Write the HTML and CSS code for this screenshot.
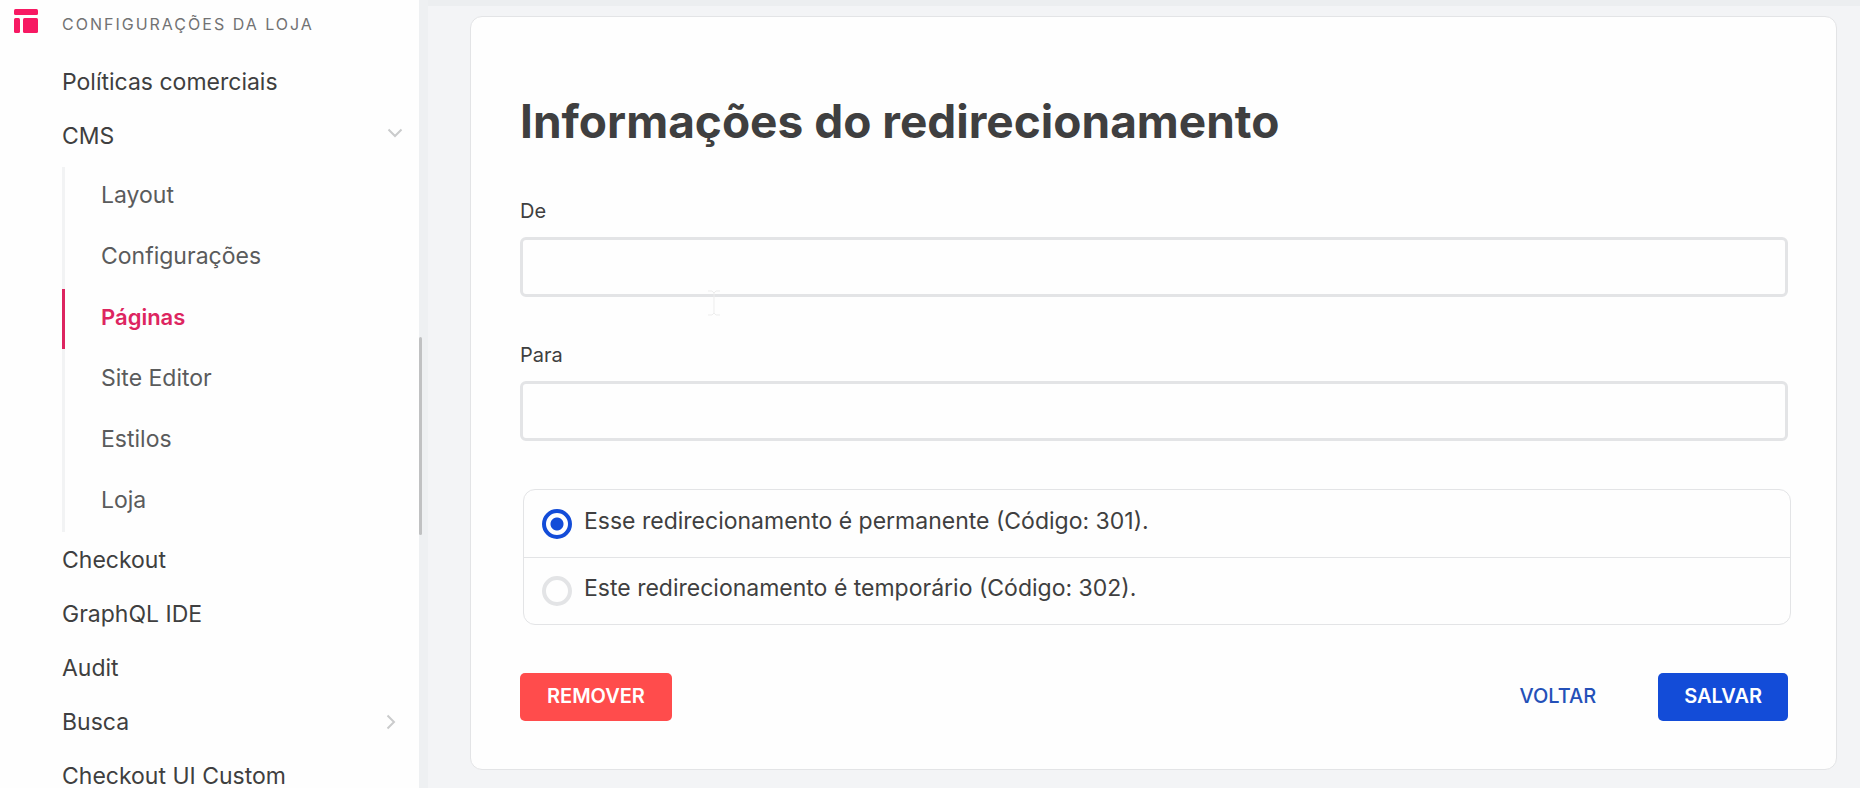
FILE: index.html
```html
<!DOCTYPE html>
<html lang="pt-BR">
<head>
<meta charset="utf-8">
<meta name="viewport" content="width=device-width, initial-scale=1">
<title>Informações do redirecionamento</title>
<link rel="stylesheet" href="styles.css">
</head>
<body>
<div class="app">
  <aside class="sidebar">
    <div class="section-head">
      <svg class="section-icon" viewBox="0 0 24 24" aria-hidden="true">
        <rect x="0" y="0" width="24" height="6" rx="1.5"/>
        <rect x="0" y="9" width="6" height="15" rx="1.5"/>
        <rect x="9" y="9" width="15" height="15" rx="1.5"/>
      </svg>
      <h2 class="section-title">Configurações da loja</h2>
    </div>
    <nav class="menu">
      <a class="menu-item" href="#">Políticas comerciais</a>
      <a class="menu-item" href="#">CMS
        <svg class="chevron-down" viewBox="0 0 16 10" aria-hidden="true"><path d="M1.500 1.500 8 8l6.500-6.500"/></svg>
      </a>
      <div class="submenu">
        <a class="submenu-item" href="#">Layout</a>
        <a class="submenu-item" href="#">Configurações</a>
        <a class="submenu-item is-active" href="#" aria-current="page">Páginas</a>
        <a class="submenu-item" href="#">Site Editor</a>
        <a class="submenu-item" href="#">Estilos</a>
        <a class="submenu-item" href="#">Loja</a>
      </div>
      <a class="menu-item" href="#">Checkout</a>
      <a class="menu-item" href="#">GraphQL IDE</a>
      <a class="menu-item" href="#">Audit</a>
      <a class="menu-item" href="#">Busca
        <svg class="chevron-right" viewBox="0 0 10 16" aria-hidden="true"><path d="M1.500 1.500 8 8l-6.500 6.500"/></svg>
      </a>
      <a class="menu-item" href="#">Checkout UI Custom</a>
    </nav>
    <div class="scroll-thumb"></div>
  </aside>
  <main class="main">
    <form class="card">
      <h1 class="title">Informações do redirecionamento</h1>
      <div class="field">
        <label class="label" for="from">De</label>
        <input class="input" id="from" type="text">
      </div>
      <div class="field">
        <label class="label" for="to">Para</label>
        <input class="input" id="to" type="text">
      </div>
      <div class="options">
        <label class="option" for="r301">
          <input class="radio" id="r301" type="radio" name="type" checked>
          <span class="option-text">Esse redirecionamento é permanente (Código: 301).</span>
        </label>
        <label class="option" for="r302">
          <input class="radio" id="r302" type="radio" name="type">
          <span class="option-text">Este redirecionamento é temporário (Código: 302).</span>
        </label>
      </div>
      <div class="actions">
        <button class="button danger" type="button">REMOVER</button>
        <button class="button plain" type="button">VOLTAR</button>
        <button class="button primary" type="submit">SALVAR</button>
      </div>
      <svg class="text-cursor" viewBox="0 0 14 26" aria-hidden="true"><path d="M1 1h4l2 2 2-2h4M7 3v20M1 25h4l2-2 2 2h4"/></svg>
    </form>
  </main>
</div>
</body>
</html>
```
FILE: styles.css
```css
* {
  box-sizing: border-box;
}

body {
  margin: 0;
  font-family: Inter, "Liberation Sans", sans-serif;
  color: #3f3f40;
  background: #f3f4f6;
}

.app {
  display: flex;
  height: 100vh;
  overflow: hidden;
}

/* Sidebar */
.sidebar {
  position: relative;
  flex: 0 0 428px;
  border-right: 9px solid #eef0f2;
  background: #fefefe;
}

.section-head {
  display: flex;
  align-items: center;
  gap: 24px;
  height: 55px;
  padding: 0 14px 8px;
}

.section-icon {
  width: 24px;
  height: 24px;
  margin-bottom: 5px;
  fill: #f71963;
}

.section-title {
  margin: 0;
  font-size: 16px;
  font-weight: 400;
  letter-spacing: 2px;
  text-transform: uppercase;
  color: #727273;
}

.menu {
  padding: 0 16px 0 62px;
}

.menu-item {
  display: flex;
  align-items: center;
  justify-content: space-between;
  height: 54px;
  font-size: 23px;
  line-height: 22px;
  color: inherit;
  text-decoration: none;
}

.chevron-down,
.chevron-right {
  fill: none;
  stroke: #cacbcc;
  stroke-width: 2;
}

.chevron-down {
  width: 16px;
  height: 10px;
  margin-bottom: 6px;
}

.chevron-right {
  width: 10px;
  height: 16px;
  margin-right: 7px;
}

.submenu {
  display: flex;
  flex-direction: column;
  gap: 1px;
  margin: 4px 0 1px;
  box-shadow: inset 3px 0 #f2f3f4;
}

.submenu-item {
  display: flex;
  align-items: center;
  height: 60px;
  padding: 0 0 4px 36px;
  border-left: 3px solid transparent;
  font-size: 23px;
  color: #5a5b5c;
  text-decoration: none;
}

.submenu-item.is-active {
  border-color: #dd2560;
  font-size: 22px;
  font-weight: 600;
  color: #dd2560;
}

.scroll-thumb {
  position: absolute;
  top: 337px;
  right: -3px;
  width: 3px;
  height: 198px;
  border-radius: 2px;
  background: #c0c1c2;
}

/* Content */
.main {
  flex: 1;
  min-width: 0;
  padding: 10px 23px 18px 42px;
  border-top: 6px solid #eceef0;
}

.card {
  position: relative;
  padding: 74px 48px 48px 49px;
  border: 1px solid #e3e4e6;
  border-radius: 12px;
  background: #fefefe;
}

.title {
  margin: 0 0 48px;
  font-size: 46px;
  line-height: 60px;
  font-weight: 700;
}

.field {
  margin-bottom: 46px;
}

.label {
  display: block;
  margin-bottom: 14px;
  font-size: 20px;
  line-height: 24px;
}

.input {
  display: block;
  width: 100%;
  height: 60px;
  padding: 0 18px;
  border: 3px solid #e3e4e6;
  border-radius: 6px;
  background: transparent;
  font: inherit;
  font-size: 20px;
}

.options {
  margin: 48px -3px 48px 3px;
  border: 1px solid #e3e4e6;
  border-radius: 12px;
}

.option {
  display: flex;
  align-items: center;
  gap: 12px;
  height: 67px;
  padding-left: 18px;
}

.option + .option {
  border-top: 1px solid #e3e4e6;
}

.radio {
  appearance: none;
  width: 30px;
  height: 30px;
  margin: 0;
  border: 4px solid #e3e4e6;
  border-radius: 50%;
}

.radio:checked {
  border-color: #134cd8;
  background: radial-gradient(circle, #134cd8 6px, transparent 7px);
}

.option-text {
  padding-bottom: 6px;
  font-size: 23px;
}

.actions {
  display: flex;
  gap: 36px;
}

.button {
  height: 48px;
  padding: 0 26px 2px;
  border: 0;
  border-radius: 5px;
  font: inherit;
  font-size: 20px;
  font-weight: 600;
}

.danger {
  margin-right: auto;
  padding: 0 27px 2px;
  background: #ff4c4c;
  color: #fff;
}

.plain {
  background: transparent;
  font-weight: 500;
  color: #2450b8;
}

.primary {
  background: #134cd8;
  color: #fff;
}

.text-cursor {
  position: absolute;
  top: 273px;
  left: 236px;
  width: 14px;
  height: 26px;
  fill: none;
  stroke: #ededed;
  stroke-width: 1;
}
```
